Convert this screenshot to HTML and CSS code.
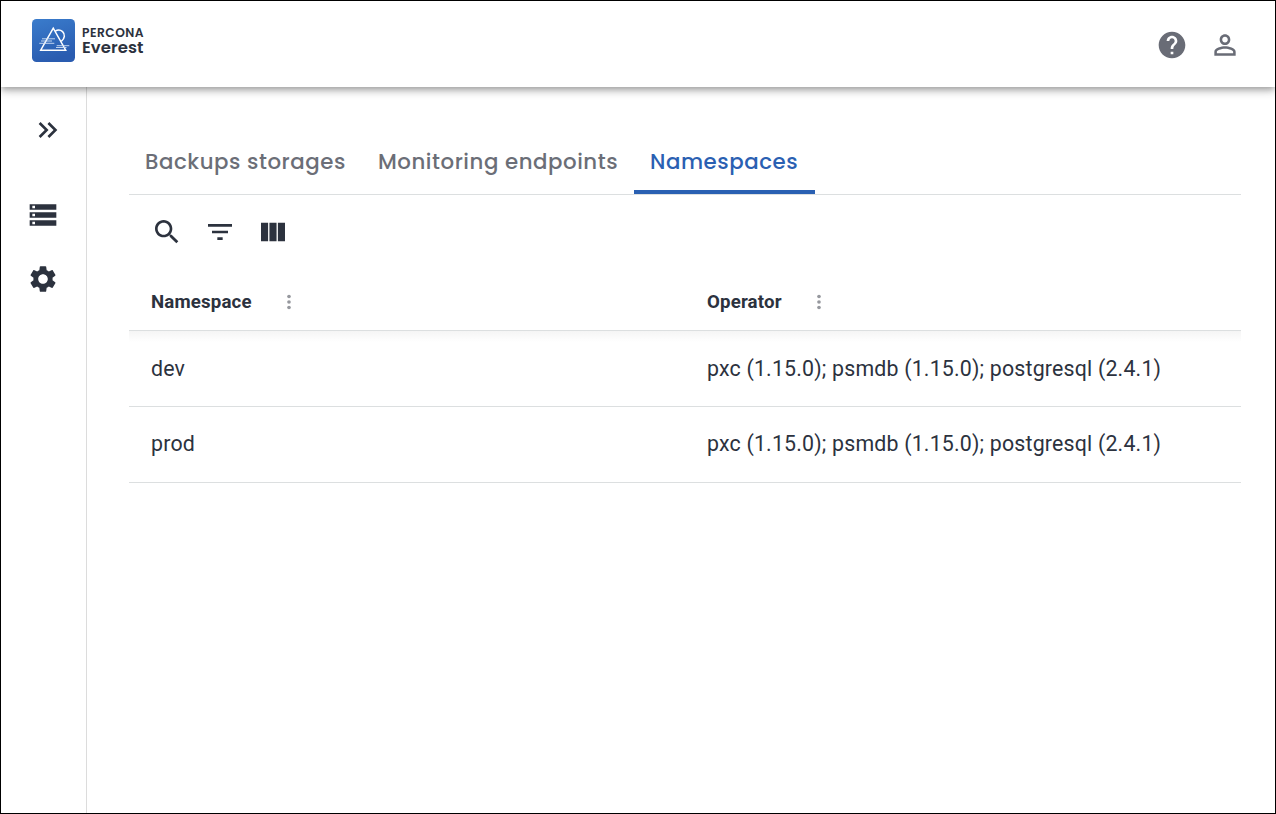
FILE: index.html
```html
<!DOCTYPE html>
<html lang="en">
<head>
<meta charset="utf-8">
<title>Percona Everest</title>
<link rel="stylesheet" href="styles.css">
</head>
<body>
<div class="app">
  <header class="topbar">
    <div class="brand">
      <svg class="brand-mark" viewBox="0 0 43 43">
        <defs><linearGradient id="mark" x1="0" y1="0" x2=".3" y2="1"><stop offset="0" stop-color="#3a7ccc"/><stop offset="1" stop-color="#2a5cb0"/></linearGradient></defs>
        <rect width="43" height="43" rx="4.500" fill="url(#mark)"/>
        <path d="M21.300 9.200 8.700 31.200H33.700Z" fill="none" stroke="#fff" stroke-width="1.500"/>
        <path d="M23.300 12.200C25.500 10.600 28.500 10.700 30.600 12.600C33.300 15.200 33 19.600 29.300 22.300" fill="none" stroke="#fff" stroke-width="1.500"/>
        <path d="M10 19.800H23M9 22H20M7.300 24.300H22.300M24.700 26.700H37.300M24 28.500H34.500" stroke="#d3e1f5" stroke-width=".9"/>
      </svg>
      <div class="brand-text"><span class="brand-company">PERCONA</span><span class="brand-product">Everest</span></div>
    </div>
    <div class="actions">
      <svg class="icon" viewBox="0 0 24 24"><path d="M12 2C6.480 2 2 6.480 2 12s4.480 10 10 10 10-4.480 10-10S17.520 2 12 2zm1 17h-2v-2h2v2zm2.070-7.750-.9.920C13.450 12.900 13 13.500 13 15h-2v-.5c0-1.100.450-2.100 1.170-2.830l1.240-1.260c.370-.360.590-.860.590-1.410 0-1.100-.9-2-2-2s-2 .9-2 2H8c0-2.210 1.790-4 4-4s4 1.790 4 4c0 .880-.360 1.680-.930 2.250z"/></svg>
      <svg class="icon" viewBox="0 0 24 24"><path d="M12 5.900c1.160 0 2.100.940 2.100 2.100s-.940 2.100-2.100 2.100S9.900 9.160 9.900 8s.940-2.100 2.100-2.100m0 9c2.970 0 6.100 1.460 6.100 2.100v1.100H5.900V17c0-.640 3.130-2.100 6.100-2.100M12 4C9.790 4 8 5.790 8 8s1.790 4 4 4 4-1.790 4-4-1.790-4-4-4zm0 9c-2.670 0-8 1.340-8 4v3h16v-3c0-2.660-5.330-4-8-4z"/></svg>
    </div>
  </header>
  <div class="body">
    <nav class="sidebar">
      <svg class="icon expand" viewBox="0 0 24 24"><path d="M6.410 6 5 7.410 9.580 12 5 16.590 6.410 18l6-6zM13 6l-1.410 1.410L16.170 12l-4.580 4.590L13 18l6-6z"/></svg>
      <svg class="icon" viewBox="0 0 24 24"><path d="M2 20h20v-4H2v4zm2-3h2v2H4v-2zM2 4v4h20V4H2zm4 3H4V5h2v2zm-4 7h20v-4H2v4zm2-3h2v2H4v-2z"/></svg>
      <svg class="icon" viewBox="0 0 24 24"><path d="M19.140 12.940c.040-.3.060-.610.060-.940 0-.320-.020-.640-.070-.940l2.030-1.580c.180-.140.230-.410.120-.610l-1.920-3.320c-.120-.220-.370-.290-.590-.220l-2.390.960c-.5-.380-1.030-.7-1.620-.940l-.360-2.540c-.040-.240-.240-.410-.480-.410h-3.840c-.240 0-.430.170-.470.410l-.360 2.540c-.590.240-1.130.570-1.620.940l-2.390-.960c-.220-.080-.470 0-.590.220L2.740 8.870c-.120.210-.080.470.120.610l2.030 1.580c-.050.300-.090.630-.090.940s.020.640.070.940l-2.030 1.580c-.180.140-.230.410-.120.610l1.920 3.320c.120.220.370.290.590.220l2.390-.960c.5.380 1.030.7 1.620.940l.360 2.540c.050.240.240.410.480.410h3.840c.240 0 .440-.170.470-.410l.360-2.540c.590-.240 1.130-.560 1.620-.940l2.390.960c.220.080.470 0 .590-.220l1.920-3.320c.120-.220.070-.470-.120-.610l-2.010-1.580zM12 15.600c-1.980 0-3.600-1.620-3.600-3.600s1.620-3.600 3.600-3.600 3.600 1.620 3.600 3.600-1.620 3.600-3.600 3.600z"/></svg>
    </nav>
    <main class="content">
      <div class="tabs">
        <div class="tab tab-backups"><span>Backups storages</span></div>
        <div class="tab tab-monitoring"><span>Monitoring endpoints</span></div>
        <div class="tab tab-namespaces active"><span>Namespaces</span></div>
      </div>
      <div class="toolbar">
        <svg class="icon" viewBox="0 0 24 24"><path d="M15.500 14h-.790l-.280-.270C15.410 12.590 16 11.110 16 9.500 16 5.910 13.090 3 9.500 3S3 5.910 3 9.500 5.910 16 9.500 16c1.610 0 3.090-.590 4.230-1.570l.270.280v.790l5 4.990L20.490 19l-4.990-5zm-6 0C7.010 14 5 11.990 5 9.500S7.010 5 9.500 5 14 7.010 14 9.500 11.990 14 9.500 14z"/></svg>
        <svg class="icon" viewBox="0 0 24 24"><path d="M10 18h4v-2h-4v2zM3 6v2h18V6H3zm3 7h12v-2H6v2z"/></svg>
        <svg class="icon" viewBox="0 0 24 24"><path d="M14.670 5v14H9.330V5h5.340zm1 14H21V5h-5.330v14zm-7.340 0V5H3v14h5.330z"/></svg>
      </div>
      <div class="table">
        <div class="row head">
          <div class="cell"><span class="label-namespace">Namespace</span><svg class="more" viewBox="0 0 24 24"><circle cx="12" cy="6" r="2"/><circle cx="12" cy="12" r="2"/><circle cx="12" cy="18" r="2"/></svg></div>
          <div class="cell"><span class="label-operator">Operator</span><svg class="more" viewBox="0 0 24 24"><circle cx="12" cy="6" r="2"/><circle cx="12" cy="12" r="2"/><circle cx="12" cy="18" r="2"/></svg></div>
        </div>
        <div class="row first"><div class="cell">dev</div><div class="cell">pxc (1.15.0); psmdb (1.15.0); postgresql (2.4.1)</div></div>
        <div class="row last"><div class="cell">prod</div><div class="cell">pxc (1.15.0); psmdb (1.15.0); postgresql (2.4.1)</div></div>
      </div>
    </main>
  </div>
</div>
</body>
</html>
```
FILE: styles.css
```css
* { box-sizing: border-box; }
body { margin: 0; background: #fff; color: #2c323e; font-family: Roboto, sans-serif; }
.app { width: 1276px; height: 814px; border: 1px solid #000; display: flex; flex-direction: column; overflow: hidden; }
.icon { width: 32px; height: 32px; display: block; fill: currentColor; flex: none; }

.topbar { height: 86px; flex: none; display: flex; justify-content: space-between; padding: 18px 34px 0 31px; background: #fff; z-index: 1;
  box-shadow: 0 3px 5px -1px rgba(0,0,0,.2), 0 5px 7px rgba(0,0,0,.14), 0 1px 13px rgba(0,0,0,.12); }
.brand { display: flex; gap: 7px; }
.brand-mark { width: 43px; height: 43px; }
.brand-text { display: flex; flex-direction: column; padding-top: 7px; font-family: Poppins, Inter, sans-serif; white-space: nowrap; }
.brand-company { font-size: 12.3px; line-height: 14px; font-weight: 600; letter-spacing: .45px; }
.brand-product { font-size: 16.5px; line-height: 15px; font-weight: 600; letter-spacing: .05px; }
.actions { display: flex; gap: 21px; padding-top: 10px; color: #696c76; }

.body { flex: 1; display: flex; min-height: 0; }
.sidebar { width: 86px; flex: none; border-right: 1px solid #dcdcdc; padding: 27px 0 0 26px; display: flex; flex-direction: column; gap: 32px; }
.expand { margin: 0 0 21px 5px; }

.content { flex: 1; padding: 40px 34px 0 42px; }
.tabs { display: flex; height: 68px; border-bottom: 1px solid #dcdfe0; }
.tab { padding: 22px 0 0 16px; font: 500 21.3px/26px Poppins, Inter, sans-serif; letter-spacing: .55px; color: #6b6e77; white-space: nowrap; border-bottom: 4px solid transparent; }
.tab.active { color: #2a60b2; border-bottom-color: #2a60b2; }
.tab-backups { width: 233px; }
.tab-monitoring { width: 272px; }
.tab-namespaces { width: 181px; }

.toolbar { display: flex; gap: 21px; padding: 21px 0 0 22px; }
.table { padding-top: 25px; }
.row { display: grid; grid-template-columns: 556px 556px; height: 76px; border-bottom: 1px solid #dcdfe0; }
.cell { display: flex; align-items: center; padding-left: 22px; font-size: 21.33px; letter-spacing: .19px; white-space: nowrap; }
.row.head { height: 58px; }
.head .cell { font-size: 18.67px; font-weight: 700; letter-spacing: .16px; }
.row.first { background: linear-gradient(#f5f5f5, #fff 11px); }
.row.last .cell { padding-bottom: 2px; }
.label-namespace { width: 127px; }
.label-operator { width: 101px; }
.more { width: 22px; height: 22px; fill: #96989e; }
```
